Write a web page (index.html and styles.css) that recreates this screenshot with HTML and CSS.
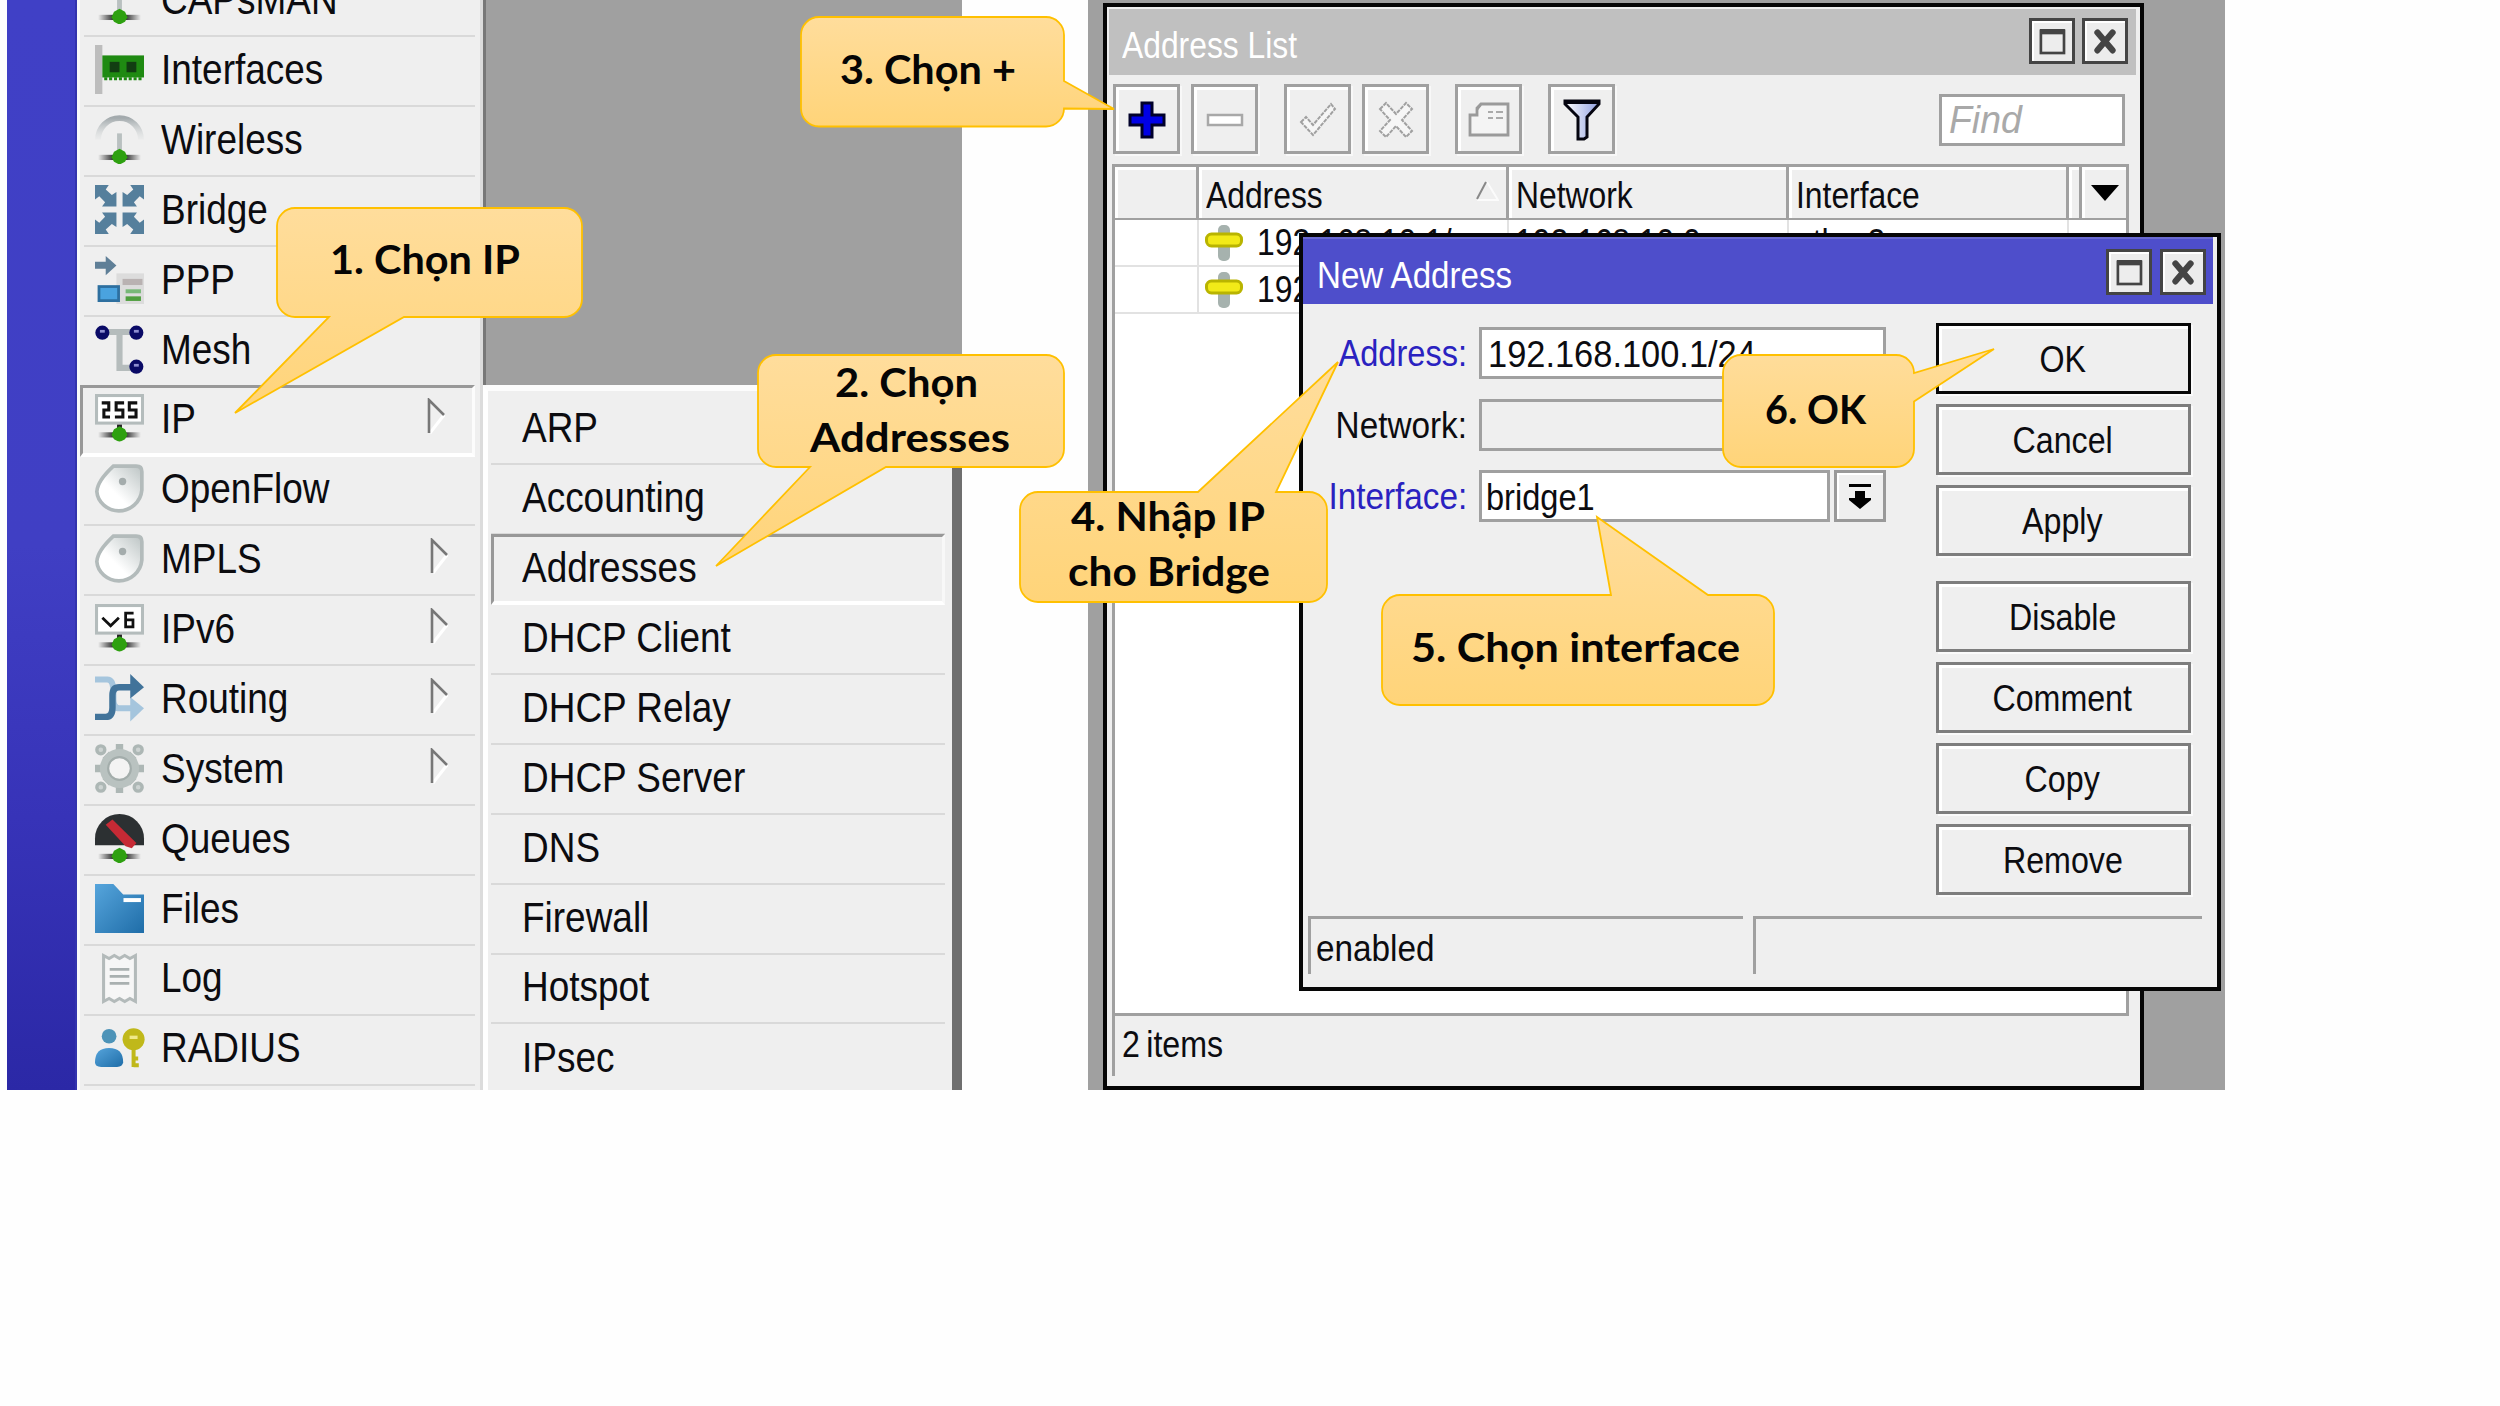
FILE: index.html
```html
<!DOCTYPE html>
<html lang="vi">
<head>
<meta charset="utf-8">
<title>RouterOS - IP Addresses</title>
<link rel="stylesheet" href="styles.css">
</head>
<body>
<svg class="defs" aria-hidden="true">
  <defs>
    <linearGradient id="callout-fill" x1="0" y1="0" x2="0" y2="1"><stop offset="0" stop-color="#ffdd9c"/><stop offset="1" stop-color="#ffd479"/></linearGradient>
    <linearGradient id="shade" x1="0" x2="1" y1="0" y2="0"><stop offset="0" stop-color="#333" stop-opacity="0"/><stop offset=".35" stop-color="#333"/><stop offset=".65" stop-color="#333"/><stop offset="1" stop-color="#333" stop-opacity="0"/></linearGradient>
    <linearGradient id="arc" x1="0" x2="0" y1="0" y2="1"><stop offset="0" stop-color="#a3aaad"/><stop offset="1" stop-color="#d8dcdc" stop-opacity=".2"/></linearGradient>
    <linearGradient id="tagfill" x1="0" x2="1" y1="1" y2="0"><stop offset=".4" stop-color="#fff"/><stop offset="1" stop-color="#bcc4c4"/></linearGradient>
    <linearGradient id="blue" x1="0" x2="1" y1="0" y2="1"><stop offset="0" stop-color="#56a5dc"/><stop offset="1" stop-color="#1f6da8"/></linearGradient>
    <linearGradient id="funnel" x1="0" x2="1"><stop offset="0" stop-color="#fff"/><stop offset="1" stop-color="#8f9fe0"/></linearGradient>
    <symbol id="plug" viewBox="0 0 16 16"><rect x="1" y="13" width="14" height="1.7" fill="url(#shade)"/><path d="M8 11l1.8 1 .8 1.8-.8 1.5L8 16.2l-1.800-.9-.8-1.500.8-1.800z" fill="#2ea010"/></symbol>
    <symbol id="antenna" viewBox="0 0 16 16"><path d="M1 8a7 7 0 0 1 14 0" fill="none" stroke="url(#arc)" stroke-width="1.900"/><rect x="7.200" y="6" width="1.600" height="6" fill="#b9c0c0"/><use href="#plug"/></symbol>
    <symbol id="tag" viewBox="0 0 16 16"><path d="M6 .7h7.500q1.800 0 1.800 1.800V8.500A7.500 7.500 0 0 1 7.800 15.300 7.500 6.800 0 0 1 .6 9Q.8 5.500 6 .7z" fill="url(#tagfill)" stroke="#b3bbbb" stroke-width="1.200"/><circle cx="9" cy="5.700" r="1.200" fill="#a4acac"/></symbol>
    <symbol id="flag" viewBox="0 0 18 36"><path d="M17 17L3 35" stroke="#fff" stroke-width="3"/><path d="M2 35V2L17 17" fill="none" stroke="#777" stroke-width="2.600"/></symbol>
    <symbol id="restore" viewBox="0 0 45 45"><rect x="10" y="11" width="26" height="25" fill="#ededed" stroke="#444" stroke-width="3"/><path d="M9 12h28" stroke="#444" stroke-width="6"/></symbol>
    <symbol id="close" viewBox="0 0 45 45"><path d="M14 13L31 33M31 13L14 33" stroke="#444" stroke-width="7" stroke-linecap="round"/></symbol>
    <symbol id="addr" viewBox="0 0 38 36"><rect x="13" y="0" width="12" height="36" rx="5" fill="#a6b2ae"/><rect x="1.500" y="9" width="35" height="12" rx="5" fill="#f2ea18" stroke="#b9b400" stroke-width="3"/></symbol>
  </defs>
</svg>

<main class="slide">
  <section class="shot shot-menu">
    <div class="rail"></div>
    <ul class="menu main-menu">
      <li><svg class="icon" viewBox="0 0 16 16"><use href="#antenna"/></svg><span class="t">CAPsMAN</span></li>
      <li><svg class="icon" viewBox="0 0 16 16"><rect width="2.400" height="16" fill="#bdbdbd"/><rect x="2.400" y="3.400" width="13.600" height="7.200" fill="#1f8a12"/><path d="M3 11h12.500" stroke="#1f8a12" stroke-width="1" stroke-dasharray="1 .6"/><rect x="4.800" y="5.500" width="3.200" height="3.400" fill="#123d12"/><rect x="10.300" y="5.500" width="3.200" height="3.400" fill="#123d12"/></svg><span class="t">Interfaces</span></li>
      <li><svg class="icon" viewBox="0 0 16 16"><use href="#antenna"/></svg><span class="t">Wireless</span></li>
      <li><svg class="icon" viewBox="0 0 16 16" fill="#557f9c"><path id="arr" d="M0 0h4.500L3.500 1.500 5.500 3.300 7 2.300V7H2.300l1-1.400L1.400 3.700 0 4.700z"/><use href="#arr" transform="matrix(-1 0 0 1 16 0)"/><path d="M0 16h4.500L3.500 14.500 5.500 12.700 7 13.700V9H2.300l1 1.400L1.400 12.300 0 11.300z"/><path d="M16 16h-4.500l1-1.500-2-1.800L9 13.700V9h4.700l-1 1.400 1.900 1.900 1.400-1z"/></svg><span class="t">Bridge</span></li>
      <li><svg class="icon" viewBox="0 0 16 16"><path d="M0 2.200h3.500V.3L7 3.400 3.500 6.600V4.500H0z" fill="#5f7f97"/><rect x="7" y="6" width="9" height="10" fill="#dcdcdc"/><rect x="9" y="7.800" width="6.500" height="2" fill="#b9b2b2"/><rect x="10" y="11.200" width="5" height="1.300" fill="#78b878"/><rect x="10" y="13.500" width="5" height="1.500" fill="#4f9f3f"/><rect x="1.300" y="10.300" width="6.400" height="4.600" fill="#4aa3df" stroke="#2d6f9f" stroke-width=".9"/></svg><span class="t">PPP</span></li>
      <li><svg class="icon" viewBox="0 0 16 16"><path d="M2 2.300h12M8 2v12h6" fill="none" stroke="#b5bcbc" stroke-width="2"/><g fill="#0a0a66"><circle cx="2.400" cy="2.500" r="2.300"/><circle cx="13.500" cy="2.500" r="2.300"/><circle cx="13.500" cy="13.600" r="2.300"/></g><g fill="#8d8dd0"><rect x="1.600" y="1.600" width="1.600" height=".9"/><rect x="12.700" y="1.600" width="1.600" height=".9"/><rect x="12.700" y="12.700" width="1.600" height=".9"/></g></svg><span class="t">Mesh</span></li>
      <li class="on"><svg class="icon" viewBox="0 0 16 16"><rect x=".5" y=".5" width="15" height="9" fill="#fff" stroke="#b4bcbc"/><path d="M2.200 2.900h2.300v2.300H2.900v2.300h2M9.500 2.900H6.900v2.300h2.200v2.300H6.500M13.800 2.900h-2.600v2.300h2.200v2.300h-2.600" fill="none" stroke="#111" stroke-width="1"/><rect x="7.200" y="10" width="1.600" height="2" fill="#222"/><use href="#plug" y="-.5"/></svg><span class="t">IP</span><svg class="flag"><use href="#flag"/></svg></li>
      <li><svg class="icon" viewBox="0 0 16 16"><use href="#tag"/></svg><span class="t">OpenFlow</span></li>
      <li><svg class="icon" viewBox="0 0 16 16"><use href="#tag"/></svg><span class="t">MPLS</span><svg class="flag"><use href="#flag"/></svg></li>
      <li><svg class="icon" viewBox="0 0 16 16"><rect x=".5" y=".5" width="15" height="9" fill="#fff" stroke="#b4bcbc"/><path d="M2.400 4.500l2.700 2.600 2.700-2.600M12.600 3H10v4.500h2.400V5.200H10" fill="none" stroke="#111" stroke-width=".9"/><rect x="7.200" y="10" width="1.600" height="2" fill="#222"/><use href="#plug" y="-.5"/></svg><span class="t">IPv6</span><svg class="flag"><use href="#flag"/></svg></li>
      <li><svg class="icon" viewBox="0 0 16 16"><path d="M0 1.800h4q2 0 2 4v2.500q0 2.900 2 2.900h4" fill="none" stroke="#a5c5dd" stroke-width="2"/><path d="M11.500 7.500L16 11.200 11.500 15.500z" fill="#a5c5dd"/><path d="M0 14h3.500q2.200 0 2.200-3V7q0-2.700 2.200-2.700h4" fill="none" stroke="#41739a" stroke-width="2.100"/><path d="M11.500 0L16 4.300 11.500 8z" fill="#41739a"/></svg><span class="t">Routing</span><svg class="flag"><use href="#flag"/></svg></li>
      <li><svg class="icon" viewBox="0 0 16 16"><g fill="none" stroke="#adb7b5"><path d="M8 0v16M0 8h16" stroke-width="2.400"/><path d="M3.500 3.500L12.500 12.500M12.500 3.500L3.500 12.500" stroke-width="3"/><circle cx="8" cy="8" r="5" stroke-width="2.800" stroke="#b9c2c0"/></g><g fill="#cdd3d2" stroke="#adb7b5" stroke-width="1.100"><circle cx="1.900" cy="1.900" r="1.300"/><circle cx="14.100" cy="1.900" r="1.300"/><circle cx="1.900" cy="14.100" r="1.300"/><circle cx="14.100" cy="14.100" r="1.300"/></g><circle cx="8" cy="8" r="3.700" fill="#f3f3f3" stroke="#a3adab" stroke-width=".7"/></svg><span class="t">System</span><svg class="flag"><use href="#flag"/></svg></li>
      <li><svg class="icon" viewBox="0 0 16 16"><path d="M0 10.200V8a8 8 0 0 1 16 0v2.200z" fill="#2c3032"/><path d="M3.500 3.500L5.700 1.800 13.500 9.500 12 11.200 10 10.500z" fill="#c62a35"/><use href="#plug"/></svg><span class="t">Queues</span></li>
      <li><svg class="icon" viewBox="0 0 16 16"><path d="M0 0h6l3.200 3.400H16V16H0z" fill="url(#blue)"/><rect x="9.300" y="4.600" width="5.700" height="1.300" fill="#fff"/></svg><span class="t">Files</span></li>
      <li><svg class="icon" viewBox="0 0 16 16"><path d="M2.800.5l1.800 1 1.700-1 1.700 1 1.700-1 1.700 1 1.800-1v15l-1.800-1-1.700 1-1.700-1-1.700 1-1.700-1-1.800 1z" fill="#f6f6f6" stroke="#b3baba" stroke-width="1"/><path d="M4.800 5h6.400M4.800 7.300h6.400M4.800 9.600h6.400" stroke="#a9b0b0" stroke-width=".9"/></svg><span class="t">Log</span></li>
      <li><svg class="icon" viewBox="0 0 16 16"><circle cx="4.600" cy="4" r="2.400" fill="#4d93b8"/><path d="M0 12.500q0-4.700 4.600-4.700t4.600 4.700q-.2 1.500-2 1.500H2q-2 0-2-1.500z" fill="url(#blue)"/><circle cx="12.600" cy="5" r="3.600" fill="#c0b81a"/><path d="M12.600 8v6M12.600 13.500h1.700M12.600 11.300h1.500" stroke="#c0b81a" stroke-width="1.300"/><rect x="11.300" y="3.800" width="2.600" height="1.100" fill="#efe98a"/></svg><span class="t">RADIUS</span></li>
      <li></li>
    </ul>
    <div class="side">
      <div class="desk"></div>
      <ul class="menu sub-menu">
        <li><span class="t">ARP</span></li>
        <li><span class="t">Accounting</span></li>
        <li class="on"><span class="t">Addresses</span></li>
        <li><span class="t">DHCP Client</span></li>
        <li><span class="t">DHCP Relay</span></li>
        <li><span class="t">DHCP Server</span></li>
        <li><span class="t">DNS</span></li>
        <li><span class="t">Firewall</span></li>
        <li><span class="t">Hotspot</span></li>
        <li class="last"><span class="t">IPsec</span></li>
      </ul>
    </div>
  </section>

  <section class="shot shot-windows">
    <div class="window list-window">
      <header class="titlebar"><span class="t">Address List</span><svg class="winbtn"><use href="#restore"/></svg><svg class="winbtn"><use href="#close"/></svg></header>
      <div class="toolbar">
        <button class="tool"><svg viewBox="0 0 38 38"><path d="M14 2h10v12h12v10H24v12H14V24H2V14h12z" fill="#0000e6" stroke="#00002a" stroke-width="3"/></svg></button>
        <button class="tool"><svg viewBox="0 0 38 38"><rect x="2" y="14" width="34" height="10" fill="#fff" stroke="#a8a8a8" stroke-width="2.500"/></svg></button>
        <button class="tool gap"><svg viewBox="0 0 38 38"><path d="M2 21l5-5 7 8L32 3l4 5-22 26z" fill="#f6f6f6" stroke="#a0a0a0" stroke-width="2" stroke-dasharray="4 1"/></svg></button>
        <button class="tool"><svg viewBox="0 0 38 38"><path d="M3 8l6-6 10 11L29 2l6 6-10 11 10 11-6 6-10-11L9 36l-6-6 10-11z" fill="#f6f6f6" stroke="#a0a0a0" stroke-width="2" stroke-dasharray="4 1"/></svg></button>
        <button class="tool gap"><svg class="wide" viewBox="0 0 42 38"><path d="M13 3h27v31H2V14h7V7z" fill="#f4f4f4" stroke="#9a9a9a" stroke-width="2.800"/><path d="M20 11h5M28 11h7M20 17h5M28 17h7" stroke="#aaa" stroke-width="2"/><path d="M9 14V9l4-5" fill="none" stroke="#999" stroke-width="2"/></svg></button>
        <button class="tool gap"><svg class="tall" viewBox="0 0 38 42"><path d="M2 2h34v3L24 18v20l-3 2h-6V18L2 5z" fill="url(#funnel)" stroke="#050510" stroke-width="3"/><path d="M2 3h34" stroke="#050510" stroke-width="4"/></svg></button>
        <div class="find"><span class="t">Find</span></div>
      </div>
      <div class="grid">
        <div class="row head">
          <div class="cell"></div>
          <div class="cell"><span class="t">Address</span><svg class="sort" viewBox="0 0 24 20"><path d="M12 1l11 18H2" fill="none" stroke="#fbfbfb" stroke-width="2"/><path d="M2 18L11 1" stroke="#888" stroke-width="2"/></svg></div>
          <div class="cell"><span class="t">Network</span></div>
          <div class="cell"><span class="t">Interface</span></div>
          <div class="cell"></div>
          <div class="cell drop"><svg viewBox="0 0 28 16"><path d="M0 0h28L14 16z"/></svg></div>
        </div>
        <div class="row">
          <div class="cell"></div>
          <div class="cell"><svg class="addr"><use href="#addr"/></svg><span class="t">192.168.10.1/..</span></div>
          <div class="cell"><span class="t">192.168.10.0</span></div>
          <div class="cell"><span class="t">ether2</span></div>
          <div class="cell"></div>
        </div>
        <div class="row">
          <div class="cell"></div>
          <div class="cell"><svg class="addr"><use href="#addr"/></svg><span class="t">192</span></div>
        </div>
      </div>
      <footer class="items"><span class="t">2 items</span></footer>
    </div>

    <div class="window dialog">
      <header class="titlebar"><span class="t">New Address</span><svg class="winbtn"><use href="#restore"/></svg><svg class="winbtn"><use href="#close"/></svg></header>
      <div class="body">
        <div class="form">
          <div class="field"><label class="req"><span class="t tight">Address:</span></label><div class="input"><span class="t ip">192.168.100.1/24</span></div></div>
          <div class="field"><label><span class="t">Network:</span></label><div class="input off"></div></div>
          <div class="field"><label class="req"><span class="t">Interface:</span></label><div class="input near"><span class="t">bridge1</span></div><button class="pick"><svg viewBox="0 0 24 26"><path d="M1 1h22v3H1zM7 8h10v7h6v2L12 26 1 17v-2h6z"/></svg></button></div>
        </div>
        <div class="actions">
          <button class="btn primary"><span class="t">OK</span></button>
          <button class="btn"><span class="t">Cancel</span></button>
          <button class="btn"><span class="t">Apply</span></button>
          <button class="btn apart"><span class="t">Disable</span></button>
          <button class="btn"><span class="t">Comment</span></button>
          <button class="btn"><span class="t">Copy</span></button>
          <button class="btn"><span class="t">Remove</span></button>
        </div>
      </div>
      <footer class="status"><div><span class="t">enabled</span></div><div></div></footer>
    </div>
  </section>

  <svg class="callouts" viewBox="0 0 2500 1406">
    <g class="bubble">
      <path d="M295 208H564a18 18 0 0 1 18 18V299a18 18 0 0 1-18 18H404L235 413 329 317H295a18 18 0 0 1-18-18V226a18 18 0 0 1 18-18z"/>
      <path d="M776 355H1046a18 18 0 0 1 18 18V449a18 18 0 0 1-18 18H886L716 566 810 467H776a18 18 0 0 1-18-18V373a18 18 0 0 1 18-18z"/>
      <path d="M819 17H1046a18 18 0 0 1 18 18V81L1114 109 1064 108.500a18 18 0 0 1-18 18H819a18 18 0 0 1-18-18V35a18 18 0 0 1 18-18z"/>
      <path d="M1038 492H1198L1338 362 1276 492H1309a18 18 0 0 1 18 18V584a18 18 0 0 1-18 18H1038a18 18 0 0 1-18-18V510a18 18 0 0 1 18-18z"/>
      <path d="M1400 595H1611L1597 517 1708 595H1756a18 18 0 0 1 18 18V687a18 18 0 0 1-18 18H1400a18 18 0 0 1-18-18V613a18 18 0 0 1 18-18z"/>
      <path d="M1741 355H1896a18 18 0 0 1 18 18L1994 349 1914 401.500V449a18 18 0 0 1-18 18H1741a18 18 0 0 1-18-18V373a18 18 0 0 1 18-18z"/>
    </g>
    <g class="steps">
      <text x="330" y="274" textLength="190" lengthAdjust="spacingAndGlyphs">1. Chọn IP</text>
      <text x="835" y="397" textLength="143" lengthAdjust="spacingAndGlyphs">2. Chọn</text>
      <text x="810" y="452" textLength="200" lengthAdjust="spacingAndGlyphs">Addresses</text>
      <text x="840" y="84" textLength="176" lengthAdjust="spacingAndGlyphs">3. Chọn +</text>
      <text x="1071" y="531" textLength="194" lengthAdjust="spacingAndGlyphs">4. Nhập IP</text>
      <text x="1068" y="586" textLength="202" lengthAdjust="spacingAndGlyphs">cho Bridge</text>
      <text x="1411" y="662" textLength="329" lengthAdjust="spacingAndGlyphs">5. Chọn interface</text>
      <text x="1765" y="424" textLength="101" lengthAdjust="spacingAndGlyphs">6. OK</text>
    </g>
  </svg>
</main>
</body>
</html>
```
FILE: styles.css
```css
* { box-sizing: border-box; }
body { margin: 0; background: #fff; }
button { padding: 0; margin: 0; font: inherit; color: inherit; }
ul { list-style: none; margin: 0; padding: 0; }

.defs { position: absolute; width: 0; height: 0; }

.slide {
  position: relative;
  width: 2500px;
  height: 1406px;
  overflow: hidden;
  display: flex;
  align-items: flex-start;
  gap: 126px;
  padding-left: 7px;
  background: #fefefe;
  color: #0c0c10;
  font-family: "Liberation Sans", Arial, sans-serif;
}

.t {
  display: inline-block;
  white-space: nowrap;
  transform: scaleX(.88);
  transform-origin: left center;
}

/* ---- menus ---- */
.shot { height: 1090px; overflow: hidden; }
.shot-menu { width: 955px; display: flex; font-size: 42px; }
.rail {
  width: 70px;
  background: linear-gradient(#4040c6 0, #403fc4 50%, #3733b8 75%, #2b28a6 100%);
  border-right: 2px solid #3434ae;
}
.main-menu {
  width: 406px;
  background: #efefef;
  border-right: 3px solid #dcdcdc;
  border-left: 3px solid #fafafa;
}
.main-menu li { margin: 0 5px 0 4px; padding: 0 0 3px 11px; gap: 17px; }
.main-menu li:first-child { margin-top: -32.500px; }
.menu li {
  height: 69.93px;
  display: flex;
  align-items: center;
  border-bottom: 2px solid #d9d9d9;
  line-height: 48px;
}
.icon { width: 49px; height: 49px; flex: none; overflow: visible; }
.flag { width: 18px; height: 36px; margin: -5px 27px 0 auto; }
.main-menu li.on {
  margin-left: 0;
  padding-left: 12px;
  border: solid;
  border-width: 3px 3px 4px;
  border-color: #989898 #fcfcfc #fff #989898;
  margin-top: -2px;
  height: 71.500px;
}
.side { flex: 1; display: flex; flex-direction: column; }
.desk { flex: none; height: 385px; background: #a0a0a0; border-left: 3px solid #787878; }
.sub-menu {
  flex: 1;
  background: #efefef;
  border: solid;
  border-width: 6px 10px 0 5px;
  border-color: #fcfcfc #6f6f6f transparent #fff;
}
.sub-menu li { margin: 0 7px 0 3px; padding: 0 0 2px 31px; }
.sub-menu li:first-child { height: 74px; padding-top: 4px; }
.sub-menu li.on {
  border: solid;
  border-width: 3px 3px 4px;
  border-color: #989898 #f8f8f8 #fff #989898;
  margin-top: -1px;
  padding-left: 28px;
  height: 71px;
}
.menu li.last { border: 0; }

/* ---- windows ---- */
.shot-windows {
  position: relative;
  width: 1137px;
  background: #a0a0a0;
  font-size: 37px;
}
.shot-windows .t { transform: scaleX(.86); }
.window {
  position: absolute;
  display: flex;
  flex-direction: column;
  background: #efefef;
  border: 4px solid #060606;
}
.list-window { left: 15px; top: 3px; width: 1041px; height: 1087px; padding: 2px 0 0; }
.dialog { left: 211px; top: 233px; width: 922px; height: 758px; }
.titlebar {
  display: flex;
  align-items: center;
  gap: 7px;
  height: 66px;
  flex: none;
  margin: 0 4px 0 2px;
  padding: 0 8px 2px 13px;
  background: #c0c0c0;
  color: #fff;
}
.titlebar .t { margin-right: auto; padding-top: 9px; }
.dialog .titlebar {
  background: #4e4ecb;
  height: 67px;
  margin: 0 4px 0 0;
  padding: 1px 7px 0 14px;
  gap: 8px;
  border-top: 2px solid #6a6ad0;
}
.dialog .titlebar .t { transform: scaleX(.895); padding-top: 8px; }
.winbtn { width: 46px; height: 46px; background: #ececec; border: 3px solid #444; box-shadow: inset 2px 2px #fff; flex: none; }

.toolbar { display: flex; align-items: flex-start; gap: 11px; height: 89px; padding: 9px 11px 0 6px; flex: none; }
.tool {
  width: 67px;
  height: 70px;
  display: grid;
  place-items: center;
  background: #efefef;
  border: 3px solid #a0a0a0;
  box-shadow: inset 3px 3px #fff, 2px 2px #f8f8f8;
}
.tool.gap { margin-left: 15px; }
.tool svg { width: 38px; height: 38px; margin-top: 2px; }
.tool .wide { width: 42px; }
.tool .tall { height: 42px; }
.find {
  width: 186px;
  height: 52px;
  margin: 10px 4px 0 auto;
  padding-left: 7px;
  background: #fff;
  border: 3px solid #a0a0a0;
  color: #a9a9a9;
  font-style: italic;
  font-size: 39px;
  line-height: 46px;
}
.shot-windows .find .t { transform: scaleX(.96); }

.grid {
  flex: 1;
  margin: 0 11px 0 5px;
  background: #fff;
  border: 3px solid #a0a0a0;
}
.row { display: grid; grid-template-columns: 84px 310px 280px 280px 13px 1fr; height: 47px; border-bottom: 2px solid #e2e2e2; }
.cell { display: flex; align-items: center; padding-left: 6px; border-right: 2px solid #e2e2e2; overflow: hidden; }
.cell:last-child { border-right: 0; }
.row:last-child .cell { border-right: 2px solid #e2e2e2; }
.head { height: 53px; border-color: #a0a0a0; }
.head .cell { background: #efefef; border-right: 3px solid #a0a0a0; box-shadow: inset 3px 3px #fff; padding: 6px 0 0 7px; }
.head .cell:last-child { border-right: 0; }
.head .drop { padding: 0 0 0 9px; }
.drop svg { width: 28px; height: 16px; }
.sort { width: 24px; height: 20px; margin: -10px 7px 0 auto; }
.addr { width: 38px; height: 36px; flex: none; margin-right: 14px; }
.items { height: 60px; margin: 0 10px 10px 5px; border-left: 3px solid #a0a0a0; padding: 8px 0 0 7px; flex: none; word-spacing: -3px; }
.items .t { transform: scaleX(.87); }

/* ---- dialog ---- */
.body { flex: 1; display: flex; justify-content: space-between; padding: 19px 26px 0 0; }
.form { width: 583px; padding-top: 4px; display: flex; flex-direction: column; gap: 19.500px; }
.field { display: flex; height: 52px; }
.field label { width: 176px; padding-right: 12px; text-align: right; line-height: 54px; flex: none; }
.shot-windows .field label .t { transform: scaleX(.9); transform-origin: right center; }
.shot-windows .field label .tight { transform: scaleX(.88); }
.req { color: #2a22c0; }
.input { flex: 1; background: #fff; border: 3px solid #a0a0a0; padding-left: 6px; line-height: 49px; }
.input.near { padding-left: 4px; }
.shot-windows .near .t { transform: scaleX(.88); }
.shot-windows .ip { transform: scaleX(.93); }
.input.off { background: #efefef; }
.pick { width: 52px; margin-left: 4px; background: #efefef; border: 3px solid #999; box-shadow: inset 2px 2px #fff; display: grid; place-items: center; }
.pick svg { width: 24px; height: 26px; }
.actions { width: 255px; display: flex; flex-direction: column; gap: 10px; }
.btn {
  height: 71px;
  background: #efefef;
  border: 3px solid #7d7d7d;
  box-shadow: inset 3px 3px #fff, 2px 2px #fafafa;
  padding: 3px 2px 0 0;
}
.shot-windows .btn .t { transform: scaleX(.87); transform-origin: center; }
.btn.primary { border: 3px solid #080808; }
.btn.apart { margin-top: 15px; }
.status { display: flex; gap: 10px; height: 71px; padding: 0 15px 13px 5px; margin-top: auto; flex: none; }
.status div { width: 435px; border: solid #a0a0a0; border-width: 3px 0 0 3px; padding: 6px 0 0 5px; line-height: 48px; }
.status div + div { flex: 1; }
.status .t { transform: scaleX(.9); }

/* ---- step callouts laid over both captures ---- */
.callouts { position: absolute; left: 0; top: 0; width: 2500px; height: 1406px; }
.bubble path { fill: url(#callout-fill); stroke: #ffc000; stroke-width: 1.800; stroke-linejoin: miter; }
.steps text { font: 700 40px Lato, "Open Sans", sans-serif; fill: #050505; }
```
